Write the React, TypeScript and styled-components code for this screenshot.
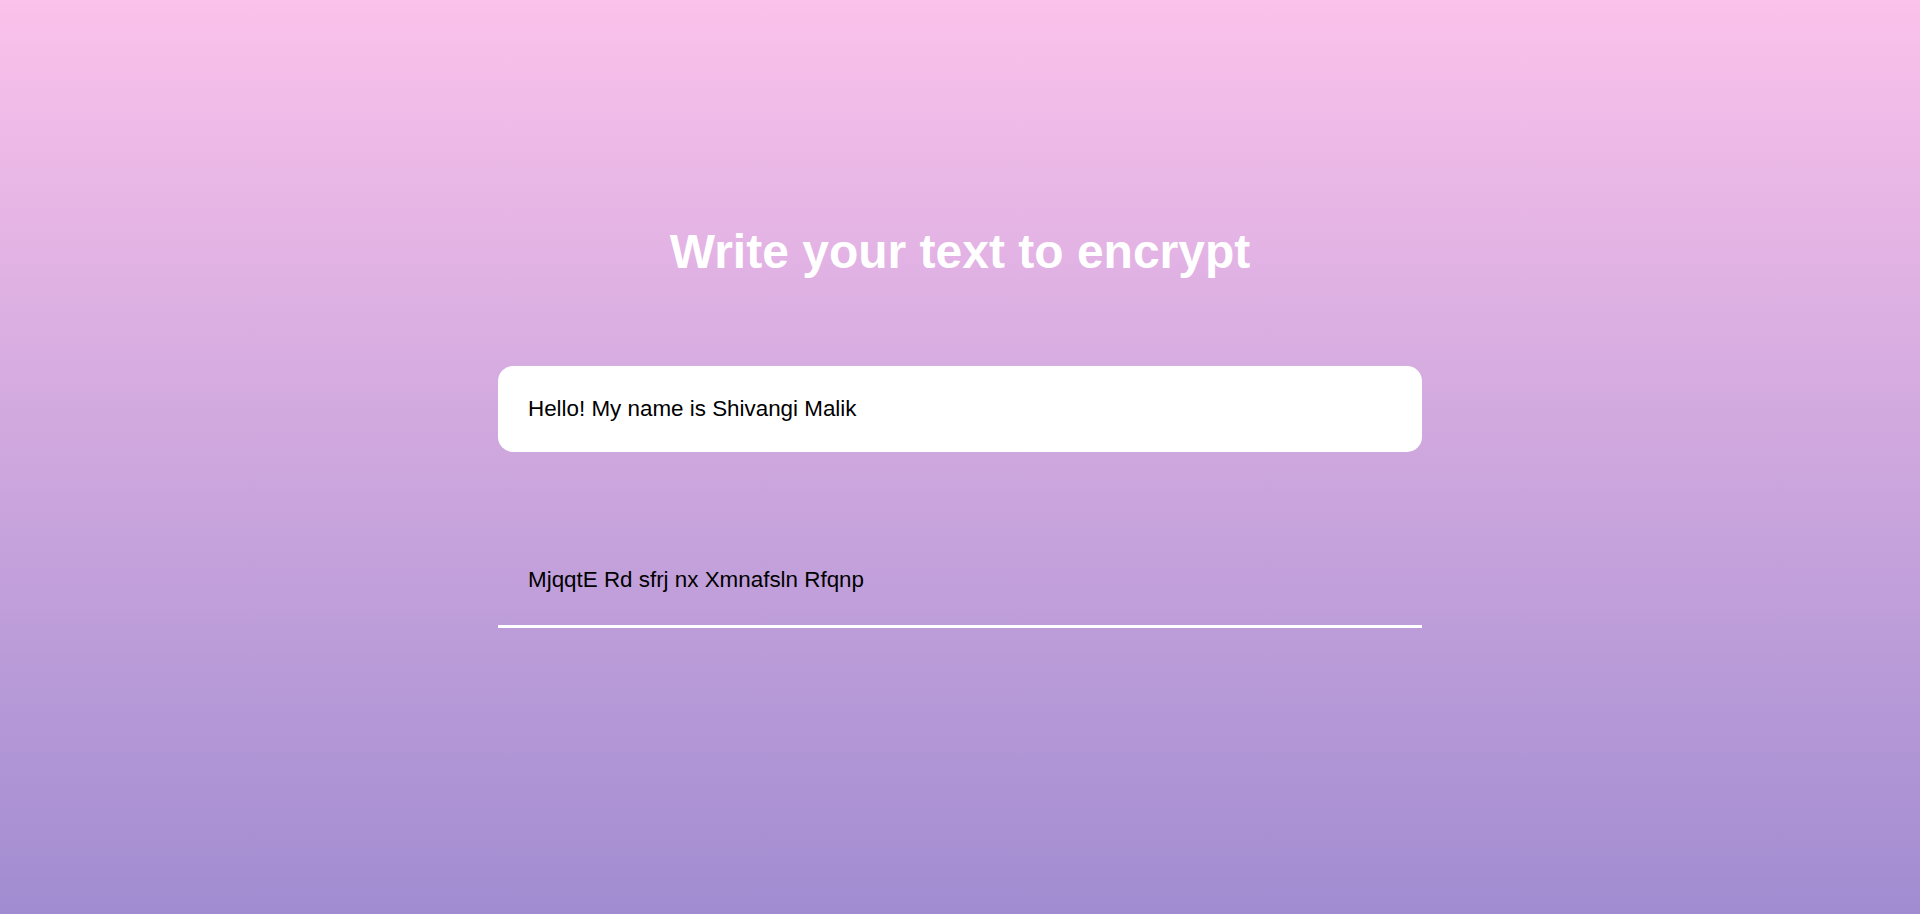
import React, { useEffect, useRef, useState } from "react";
import styled, { createGlobalStyle } from "styled-components";

const GlobalStyle = createGlobalStyle`
  html, body {
    margin: 0;
    padding: 0;
  }
  body {
    font-family: "Liberation Sans", Arial, sans-serif;
  }
`;

const Page = styled.main`
  min-height: 914px;
  box-sizing: border-box;
  background-image: linear-gradient(to top, #a18cd1 0%, #fbc2eb 100%);
  display: flex;
  flex-direction: column;
  align-items: center;
  padding-top: 223.5px;
`;

const Title = styled.h1`
  margin: 0;
  font-family: "Liberation Sans", Arial, sans-serif;
  font-size: 48px;
  font-weight: 700;
  line-height: normal;
  color: #ffffff;
  text-align: center;
`;

const Field = styled.input`
  margin-top: 87px;
  width: 924px;
  box-sizing: border-box;
  padding: 30px;
  border: none;
  border-radius: 15px;
  background: #ffffff;
  color: #000000;
  caret-color: #000000;
  font-family: "Liberation Sans", Arial, sans-serif;
  font-size: 22.4px;
  line-height: normal;
  outline: none;
`;

const Output = styled.div`
  margin-top: 85px;
  width: 924px;
  box-sizing: border-box;
  padding: 30px 30px 32px 30px;
  border-bottom: 3px solid #ffffff;
  color: #000000;
  font-family: "Liberation Sans", Arial, sans-serif;
  font-size: 22.4px;
  line-height: normal;
`;

function encrypt(text: string): string {
  return text
    .split("")
    .map((ch) => {
      const c = ch.charCodeAt(0);
      if (c >= 65 && c <= 90) return String.fromCharCode(((c - 65 + 5) % 26) + 65);
      if (c >= 97 && c <= 122) return String.fromCharCode(((c - 97 + 5) % 26) + 97);
      if (ch === "!") return "E";
      return ch;
    })
    .join("");
}

export default function App() {
  const [value, setValue] = useState("Hello! My name is Shivangi Malik");
  const ref = useRef<HTMLInputElement>(null);

  useEffect(() => {
    const el = ref.current;
    if (el) {
      el.focus();
      const len = el.value.length;
      el.setSelectionRange(len, len);
    }
  }, []);

  return (
    <>
      <GlobalStyle />
      <Page>
        <Title>Write your text to encrypt</Title>
        <Field
          ref={ref}
          type="text"
          value={value}
          onChange={(e) => setValue(e.target.value)}
        />
        <Output>{encrypt(value)}</Output>
      </Page>
    </>
  );
}
